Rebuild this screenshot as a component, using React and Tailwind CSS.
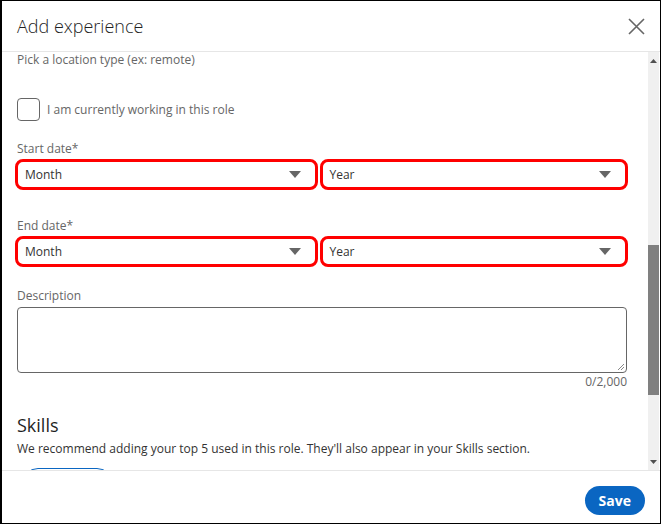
import React from 'react'

function Caret() {
  return (
    <svg width="12" height="7" viewBox="0 0 12 7" className="shrink-0">
      <path d="M0 0 L12 0 L6 7 Z" fill="#666666" />
    </svg>
  )
}

function SelectBox({ label, width }) {
  return (
    <div className={`${width} h-[31px] rounded-[8px] border-[3px] border-[#ff0000] flex items-center justify-between pl-[7px] pr-[14px]`}>
      <span className="text-[12px] text-[#333333]">{label}</span>
      <Caret />
    </div>
  )
}

export default function App() {
  return (
    <div className="w-[661px] h-[524px] bg-white border border-black border-l-2 flex flex-col font-['Open_Sans',sans-serif] overflow-hidden">
      {/* header */}
      <div className="h-[51px] shrink-0 border-b border-[#e6e6e6] flex items-center justify-between pl-[15px] pr-[15px]">
        <h2 className="text-[18px] text-[#1f1f1f] font-light">Add experience</h2>
        <svg width="17" height="17" viewBox="0 0 17 17">
          <path d="M1 1 L16 16 M16 1 L1 16" stroke="#666666" strokeWidth="1.6" />
        </svg>
      </div>

      {/* scrolling body */}
      <div className="flex-1 min-h-0 flex">
        <div className="flex-1 overflow-hidden pl-[13px] pr-[20px]">
          <p className="text-[12px] leading-[16px] text-[#666666] pl-[2px]">Pick a location type (ex: remote)</p>

          <label className="mt-[30px] flex items-center gap-[7px] pl-[2px]">
            <span className="w-[23px] h-[23px] rounded-[4px] border border-[#666666]" />
            <span className="text-[12px] text-[#666666]">I am currently working in this role</span>
          </label>

          <p className="mt-[19px] text-[12px] leading-[18px] text-[#666666] pl-[2px]">Start date*</p>
          <div className="mt-[1px] flex gap-[2px]">
            <SelectBox label="Month" width="w-[303px]" />
            <SelectBox label="Year" width="w-[309px]" />
          </div>

          <p className="mt-[27px] text-[12px] leading-[18px] text-[#666666] pl-[2px]">End date*</p>
          <div className="mt-[1px] flex gap-[2px]">
            <SelectBox label="Month" width="w-[303px]" />
            <SelectBox label="Year" width="w-[309px]" />
          </div>

          <p className="mt-[20px] text-[12px] leading-[18px] text-[#666666] pl-[2px]">Description</p>
          <div className="ml-[2px] mt-[2px] w-[610px] h-[66px] rounded-[4px] border border-[#666666] relative">
            <svg width="8" height="8" viewBox="0 0 8 8" className="absolute right-[1px] bottom-[1px]">
              <path d="M7 1 L1 7 M7 4 L4 7" stroke="#888888" strokeWidth="1" />
            </svg>
          </div>
          <p className="text-right text-[12px] leading-[18px] text-[#666666] w-[612px]">0/2,000</p>

          <h3 className="mt-[22px] text-[18px] leading-[24px] text-[#1f1f1f] pl-[2px]">Skills</h3>
          <p className="mt-[3px] text-[12px] leading-[18px] text-[#333333] pl-[2px]">We recommend adding your top 5 used in this role. They'll also appear in your Skills section.</p>
          <div className="mt-[10px] ml-[7px] w-[91px] h-[32px] rounded-full border border-[#0a66c2]" />
        </div>

        {/* scrollbar */}
        <div className="w-[11px] mr-[1px] bg-[#f0f0f0] flex flex-col items-center">
          <div className="h-[17px] flex items-center justify-center">
            <svg width="7" height="4" viewBox="0 0 7 4"><path d="M0 4 L3.5 0 L7 4 Z" fill="#505050" /></svg>
          </div>
          <div className="mt-[176px] w-full h-[150px] bg-[#808080]" />
          <div className="flex-1" />
          <div className="h-[17px] flex items-center justify-center">
            <svg width="7" height="4" viewBox="0 0 7 4"><path d="M0 0 L3.5 4 L7 0 Z" fill="#505050" /></svg>
          </div>
        </div>
      </div>

      {/* footer */}
      <div className="h-[53px] shrink-0 border-t border-[#e6e6e6] flex items-start justify-end pt-[15px] pr-[15px]">
        <button className="h-[29px] px-[14px] rounded-full bg-[#0a66c2] text-white text-[14px] font-bold">Save</button>
      </div>
    </div>
  )
}
